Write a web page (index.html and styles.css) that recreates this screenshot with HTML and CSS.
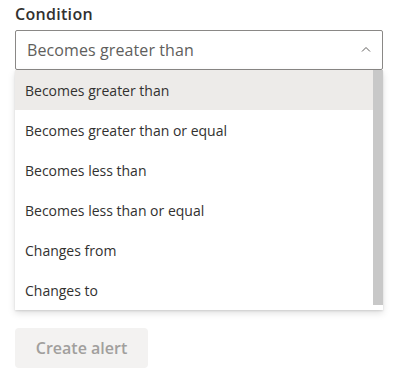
FILE: index.html
```html
<!DOCTYPE html>
<html>
<head>
<meta charset="utf-8">
<link rel="stylesheet" href="styles.css">
</head>
<body>
<div class="form">
  <label class="label">Condition</label>
  <div class="dropdown">
    <span class="value">Becomes greater than</span>
    <svg class="chevron" width="10" height="6" viewBox="0 0 10 6"><path d="M1 5.5 L5 1.5 L9 5.5" fill="none" stroke="#605e5c" stroke-width="1"/></svg>
  </div>
  <div class="menu">
    <ul class="options">
      <li class="option selected">Becomes greater than</li>
      <li class="option">Becomes greater than or equal</li>
      <li class="option">Becomes less than</li>
      <li class="option">Becomes less than or equal</li>
      <li class="option">Changes from</li>
      <li class="option">Changes to</li>
    </ul>
    <div class="scrollbar"><div class="thumb"></div></div>
  </div>
  <button class="btn" disabled>Create alert</button>
</div>
</body>
</html>
```
FILE: styles.css
```css
html, body {
  margin: 0;
  padding: 0;
  background: #ffffff;
}
body {
  font-family: "Open Sans", "Noto Sans", "Liberation Sans", sans-serif;
  color: #323130;
}
.form {
  display: flex;
  flex-direction: column;
  align-items: flex-start;
  padding: 3px 0 0 15px;
  width: 368px;
}
.label {
  font-size: 16px;
  font-weight: 600;
  line-height: 22px;
  letter-spacing: 0.3px;
  color: #323130;
  margin-bottom: 5px;
}
.dropdown {
  box-sizing: border-box;
  width: 368px;
  height: 40px;
  border: 1px solid #8a8886;
  border-radius: 2px;
  display: flex;
  align-items: center;
  justify-content: space-between;
  padding: 0 11px 0 11px;
}
.value {
  font-size: 16px;
  color: #605e5c;
  letter-spacing: 0.1px;
}
.chevron {
  display: block;
  margin-top: -2px;
}
.menu {
  width: 368px;
  height: 240px;
  display: flex;
  background: #ffffff;
  box-shadow: 0 3.2px 7.2px rgba(0,0,0,0.13), 0 0.6px 1.8px rgba(0,0,0,0.11);
}
.options {
  list-style: none;
  margin: 0;
  padding: 0;
  flex: 1;
}
.option {
  height: 40px;
  display: flex;
  align-items: center;
  padding-left: 10px;
  font-size: 14px;
  color: #323130;
}
.option.selected {
  background: #edebe9;
}
.scrollbar {
  width: 10px;
  display: flex;
  flex-direction: column;
  padding-bottom: 5px;
}
.thumb {
  flex: 1;
  background: #c8c8c8;
}
.btn {
  margin-top: 18px;
  width: 133px;
  height: 40px;
  border: none;
  border-radius: 4px;
  background: #f3f2f1;
  color: #a19f9d;
  font-family: inherit;
  font-size: 16px;
  font-weight: 600;
  padding: 0;
}
```
